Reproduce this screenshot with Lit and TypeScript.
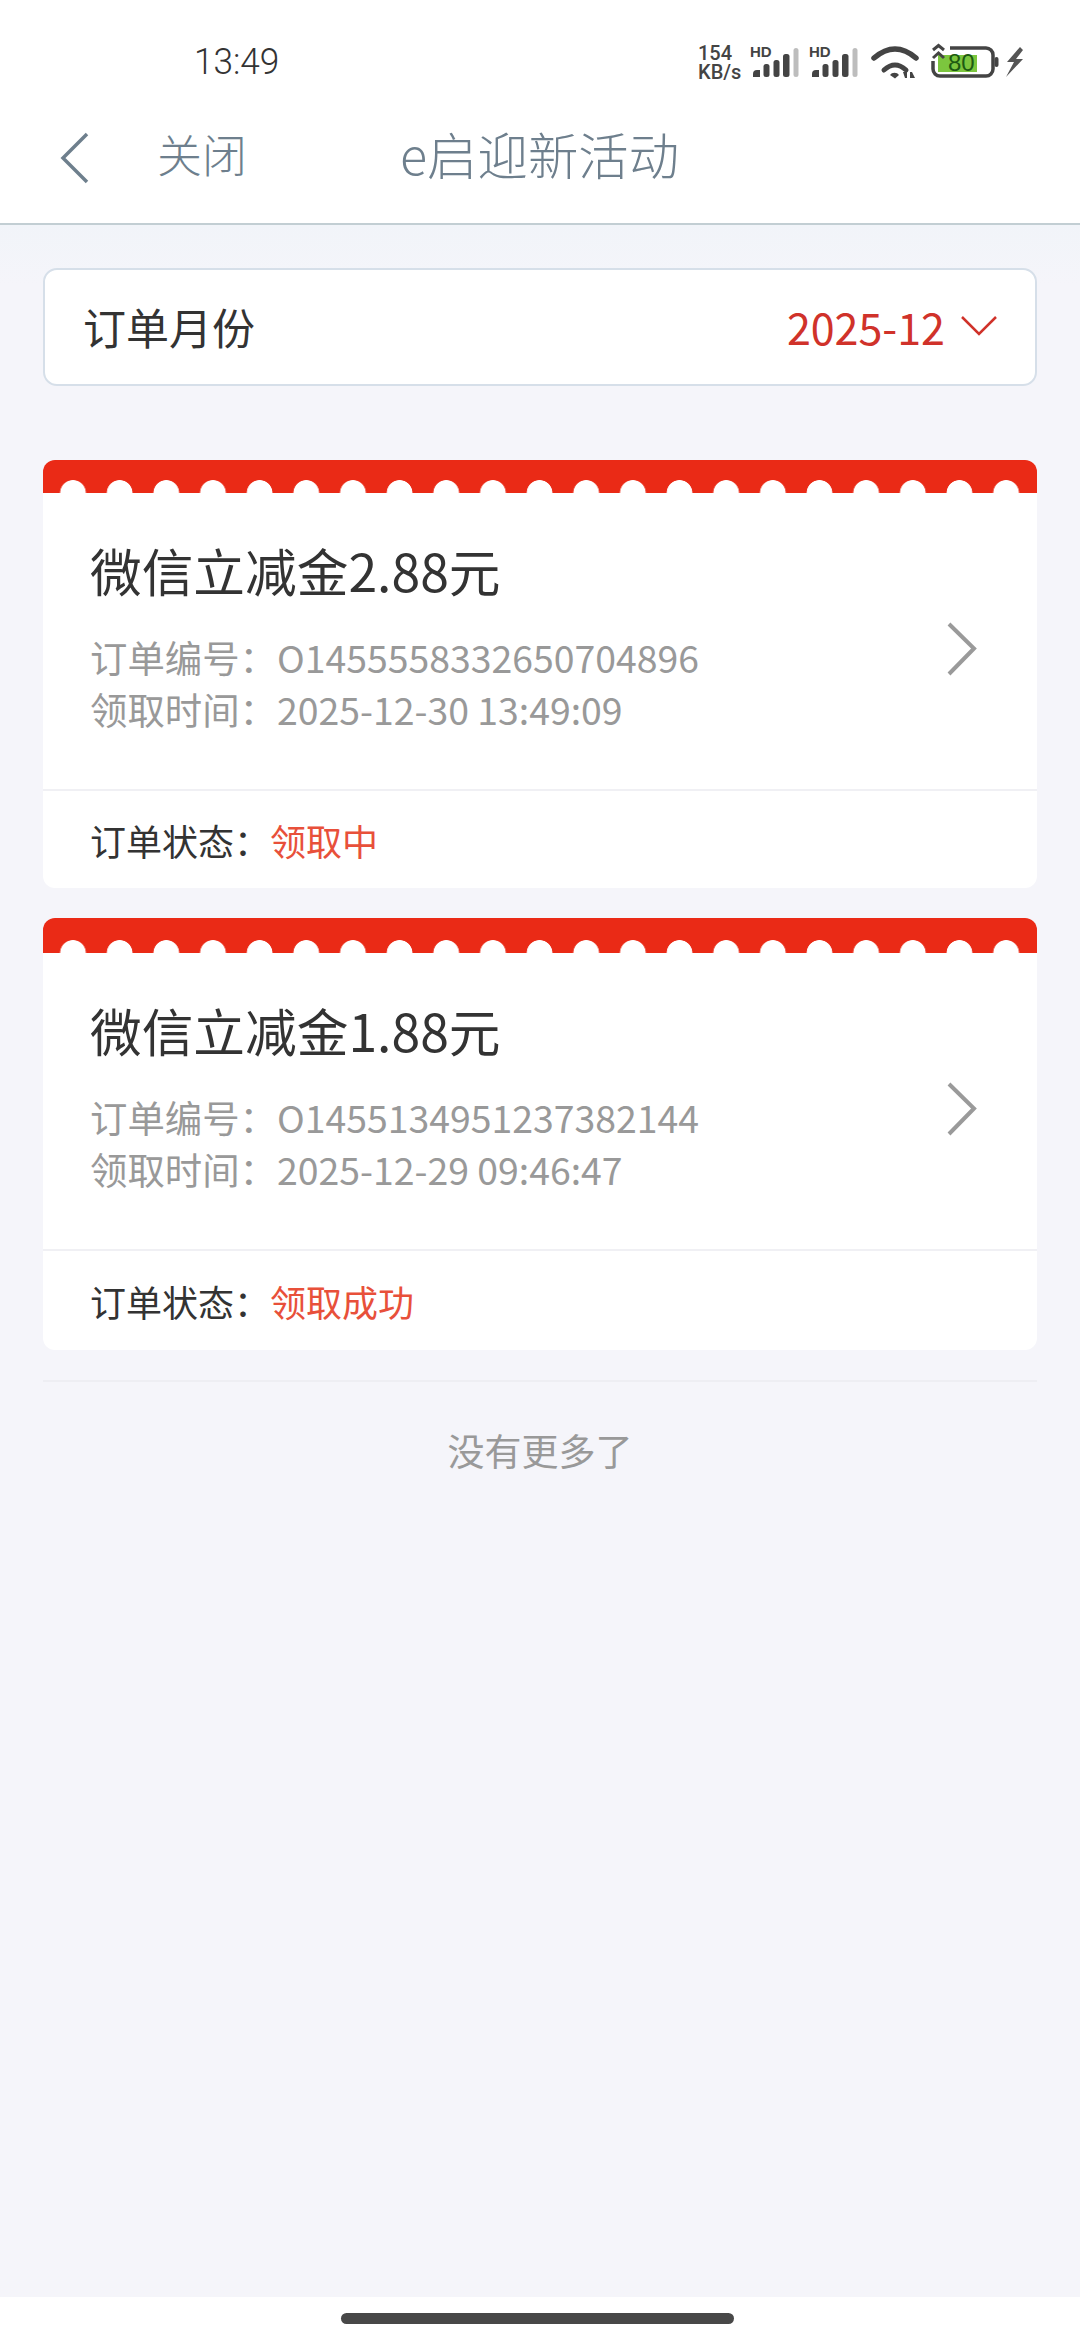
import { LitElement, html, css } from "lit";
import { customElement } from "lit/decorators.js";

const signal = () => html`<svg class="sig" width="52" height="36" viewBox="0 -4 52 36">
  <text x="0" y="11" class="hd">HD</text>
  <path d="M3 28 a4 4 0 0 1 4 -4 h3 v7 h-7z" fill="#444"/>
  <rect x="13.5" y="18" width="6" height="13" rx="2.5" fill="#444"/>
  <rect x="23.5" y="14" width="6" height="17" rx="2.5" fill="#444"/>
  <rect x="33" y="8" width="6.5" height="23" rx="2.5" fill="#444"/>
  <rect x="43.5" y="2" width="5" height="29" rx="2.5" fill="#bdbdbd"/>
</svg>`;

const orders = [
  { title: "微信立减金2.88元", no: "O1455558332650704896", time: "2025-12-30 13:49:09", status: "领取中", tall: false },
  { title: "微信立减金1.88元", no: "O1455134951237382144", time: "2025-12-29 09:46:47", status: "领取成功", tall: true },
];

@customElement("app-root")
export class AppRoot extends LitElement {
  static styles = css`
    :host { display: block; width: 1080px; height: 2340px; font-family: "Noto Sans CJK SC", "Noto Sans", sans-serif; }
    .page { display: flex; flex-direction: column; width: 1080px; height: 2340px; background: #f5f5fa; overflow: hidden; }
    .top { background: #fff; height: 225px; box-sizing: border-box; flex: none; border-bottom: 2px solid #c2ced3; display: flex; flex-direction: column; }
    .status { height: 88px; flex: none; padding: 34px 56px 0 194px; box-sizing: border-box; display: flex; align-items: center; }
    .clock { display: inline-block; font-family: Roboto, sans-serif; font-weight: 300; font-size: 37px; color: #333; transform: scaleX(0.95); transform-origin: left center; }
    .icons { margin-left: auto; align-self: flex-start; margin-top: 9px; display: flex; align-items: flex-start; }
    .speed { font-family: Roboto, sans-serif; font-weight: 500; font-size: 20px; line-height: 19px; color: #444; width: 46px; margin: 1px 6px 0 0; }
    .sig { display: block; margin-top: -1px; margin-right: 7px; }
    .sig + .sig { margin-right: 10px; }
    .wifi { display: block; margin-top: 2px; margin-right: 11px; }
    .hd { font: 700 15px "Liberation Sans", sans-serif; fill: #444; }
    .bat-num { font: 400 24px "Liberation Sans", sans-serif; fill: #1d5a12; }
    .nav { flex: 1; display: flex; align-items: center; padding: 0 0 4px 59px; color: #6e7f8d; font-weight: 300; }
    .back { display: block; margin: 8px 68px 0 0; }
    .close { font-size: 45px; width: 243px; flex: none; }
    .title { font-size: 50.4px; }
    main { flex: 1; padding: 43px 43px 0; display: flex; flex-direction: column; background: linear-gradient(#f1f4f9, #f5f5fa 60px); }
    .select { height: 118px; flex: none; box-sizing: border-box; background: #fff; border: 2px solid #d6dfe9; border-radius: 14px; display: flex; align-items: center; padding: 0 38px 2px 38px; font-size: 43px; color: #333; margin-bottom: 74px; }
    .month { margin-left: auto; color: #d0322a; display: flex; align-items: center; gap: 16px; }
    .order { background: #fff; border-radius: 12px; overflow: hidden; margin-bottom: 30px; }
    .strip { height: 33px; background-color: #ea2a16; }
    .strip.tall { height: 35px; }
    .dots { height: 100%; background-image: radial-gradient(circle at 50% 100%, #fff 12.5px, transparent 13.2px); background-size: 46.67px 13px; background-position: 6.67px 100%; background-repeat: repeat-x; }
    .body { height: 298px; box-sizing: border-box; padding: 41px 47px 0; display: flex; align-items: flex-start; justify-content: space-between; border-bottom: 2px solid #f0f0f4; }
    .name { font-size: 51.7px; line-height: 72px; color: #333; margin-bottom: 25px; }
    .line { font-size: 37.4px; line-height: 52px; color: #999; white-space: nowrap; }
    .arrow { display: block; margin: 88px 12px 0 0; }
    .foot { height: 97px; box-sizing: border-box; display: flex; align-items: center; padding: 0 0 0 47px; font-size: 36px; color: #333; }
    .foot.tall { height: 99px; }
    .state { color: #e8503a; }
    .end { border-top: 2px solid #eeeef3; text-align: center; font-size: 37px; color: #999; padding-top: 41px; line-height: 54px; }
    .bar { height: 43px; background: #fff; flex: none; display: flex; justify-content: center; align-items: center; }
    .pill { width: 393px; height: 11px; border-radius: 6px; background: #484848; margin-right: 6px; }
  `;

  render() {
    return html`<div class="page">
      <div class="top">
        <div class="status">
          <span class="clock">13:49</span>
          <div class="icons">
            <div class="speed">154<br />KB/s</div>
            ${signal()}${signal()}
            <svg class="wifi" width="48" height="34" viewBox="0 0 48 34">
              <path d="M3 13 Q24 -5 45 13" fill="none" stroke="#444" stroke-width="5.5" stroke-linecap="round"/>
              <path d="M13 25 Q24 15 35 25" fill="none" stroke="#444" stroke-width="5" stroke-linecap="round"/>
              <path d="M19 30 a5 4 0 0 1 9 0 l-4 3.5z" fill="#444"/>
              <path d="M32 27 h4 v6 h-2z M39 27 h2 l3 6 h-5z" fill="#444"/>
            </svg>
            <svg width="94" height="40" viewBox="0 0 94 40">
              <path d="M8 12 H47 V29 H8 V20z" fill="#7cc63e"/>
              <path d="M20 5 H56 a7 7 0 0 1 7 7 V26 a7 7 0 0 1 -7 7 H10 a7 7 0 0 1 -7 -7 V18" fill="none" stroke="#444" stroke-width="3.5"/>
              <path d="M3 7 L8.5 2.5 L14 7 M3 15 L8.5 10 L14 15" fill="none" stroke="#444" stroke-width="3"/>
              <rect x="64.5" y="14" width="4" height="10" rx="2" fill="#444"/>
              <text x="18" y="28" class="bat-num">80</text>
              <path d="M90 4 L77 19 L84 19 L76 34 L93 16 L86 16 L93 7z" fill="#555"/>
            </svg>
          </div>
        </div>
        <div class="nav">
          <svg class="back" width="30" height="52" viewBox="0 0 30 52"><path d="M28 2 L4 26 L28 50" fill="none" stroke="#6e7f8d" stroke-width="3.5"/></svg>
          <span class="close">关闭</span>
          <span class="title">e启迎新活动</span>
        </div>
      </div>
      <main>
        <div class="select">
          <span>订单月份</span>
          <span class="month">2025-12
            <svg width="36" height="22" viewBox="0 0 36 22"><path d="M1 2 L18 19 L35 2" fill="none" stroke="#d0322a" stroke-width="2.5"/></svg>
          </span>
        </div>
        ${orders.map((o) => html`<div class="order">
          <div class="strip ${o.tall ? "tall" : ""}"><div class="dots"></div></div>
          <div class="body">
            <div>
              <div class="name">${o.title}</div>
              <div class="line">订单编号：${o.no}</div>
              <div class="line">领取时间：${o.time}</div>
            </div>
            <svg class="arrow" width="32" height="54" viewBox="0 0 32 54"><path d="M3 2 L28 26.5 L3 52" fill="none" stroke="#9a9a9a" stroke-width="4"/></svg>
          </div>
          <div class="foot ${o.tall ? "tall" : ""}"><span>订单状态：</span><span class="state">${o.status}</span></div>
        </div>`)}
        <div class="end">没有更多了</div>
      </main>
      <div class="bar"><div class="pill"></div></div>
    </div>`;
  }
}
